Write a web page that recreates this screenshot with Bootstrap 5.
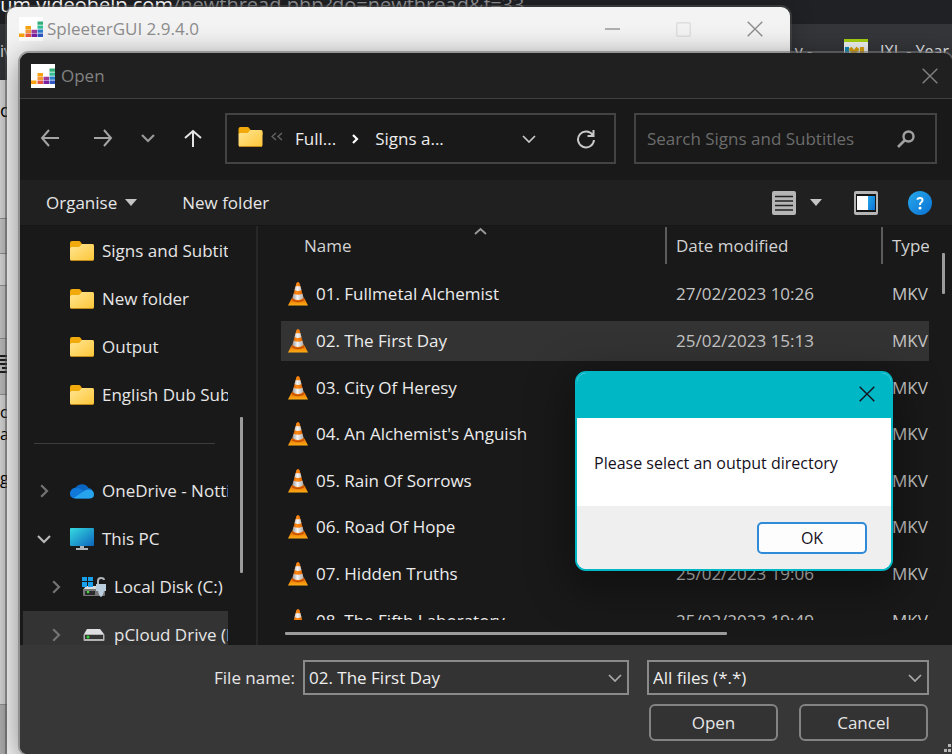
<!DOCTYPE html>
<html lang="en">
<head>
<meta charset="utf-8">
<meta name="viewport" content="width=device-width, initial-scale=1">
<title>Open</title>
<link href="https://cdn.jsdelivr.net/npm/bootstrap@5.3.0/dist/css/bootstrap.min.css" rel="stylesheet">
<style>
body{font-family:"Open Sans","Noto Sans",sans-serif;font-size:17px;line-height:24px;color:#e6e6e6;background:#e4e4e4;height:100vh;overflow:hidden;position:relative}
svg{display:block;flex:none}
button{font:inherit;color:inherit}
.plain-btn{background:none;border:0;padding:0}
/* browser behind the windows */
.browser{position:absolute;inset:0}
.url-row{height:24px;background:#202124;color:#8f9194;font-size:20px;line-height:9px;overflow:hidden;white-space:nowrap}
.url-row b{font-weight:400;color:#fff}
.url-row span{display:block;margin-left:-8px}
.mark-row{height:56px;background:#35363a;color:#e8eaed;font-size:16px;padding:15px 3px 0 0}
.page-edge{width:24px;color:#000;font-size:18px;overflow:hidden}
.page-edge div{border-top:1px solid #999;white-space:nowrap;overflow:hidden}
/* application window */
.app-win{position:absolute;left:7px;top:7px;right:162px;bottom:-20px;background:#f3f3f3;border-radius:9px 9px 0 0;box-shadow:0 0 0 2px rgba(80,80,80,.5),0 4px 24px rgba(0,0,0,.3);color:#8d8d8d;overflow:hidden}
.app-title{height:44px;padding:0 27px 0 12px}
/* file dialog */
.dlg{position:absolute;left:20px;top:53px;right:0;bottom:0;background:#191919;border-radius:9px 9px 0 8px;box-shadow:0 0 0 2px rgba(115,115,115,.6),0 6px 30px rgba(0,0,0,.5);overflow:hidden}
.dlg-title,.nav-strip,.tools,.foot{flex:none}
.dlg-title{height:46px;background:#202020;border-bottom:1px solid #3f3f3f;color:#828282;padding:0 14px 0 11px;gap:6px}
.nav-strip{height:81px;padding:0 15px 2px 18px}
.nav-btns{width:167px;margin-right:20px}
.nav-btns button{width:24px;display:flex;justify-content:center}
.box-line{border:2px solid #434343;height:51px;min-width:0}
.addr{flex:391 1 391px;padding:0 18px 0 11px;color:#ededed}
.find{flex:303 1 303px;padding:0 20px 0 11px;margin-left:18px}
.find input{background:none;border:0;outline:0;padding:0;min-width:0;color:#eee;width:100%}
.find input::placeholder{color:#6c6c6c;opacity:1}
.tools{height:46px;background:#202020;border-bottom:1px solid #161616;padding:0 20px 0 26px}
.make{margin-left:45px}
.views{gap:14px}
.pane{margin:0 30px 0 32px}
.side{width:208px;overflow:hidden;padding-top:1px}
.side-row{height:48px;padding-left:50px;gap:8px;white-space:nowrap;color:inherit;text-decoration:none}
.side-row svg.tw{margin-left:-34px;margin-right:10px}
.side-row.sub{padding-left:62px}
.side-row.here{background:#333;margin-left:3px;padding-left:59px}
.side-rule{height:1px;background:#3d3d3d;margin:24px 13px 23px 14px}
.side-gap{width:30px;border-right:2px solid #272727;padding:191px 0 0 12px}
.bar{background:#9b9b9b;border-radius:1px}
.bar-side{width:3px;height:156px}
.bar-h{height:3px;width:442px;margin:12px 0 0 4px}
.bar-v{right:7px;top:27px;width:3px;height:41px}
.files{flex:1;min-width:0;padding-left:23px}
.files-view{height:394px;flex:none;overflow:hidden;margin-right:23px;position:relative}
.files table{width:100%;height:418px;table-layout:fixed;border-collapse:separate;border-spacing:0}
.files th{font-weight:400;height:45px;padding:0 0 5px;color:#d2d2d2}
.files td,.files th{white-space:nowrap;overflow:hidden}
.files td{border:solid transparent;border-width:3px 0;padding:0;background-clip:padding-box;color:#c4c4c4}
.files td:first-child{color:#ececec}
.files tr.sel td{background-color:#333}
.col-date{width:216px}
.col-type{width:48px}
.files th+th,.files td+td{padding-left:11px}
.split{background:linear-gradient(#5c5c5c,#5c5c5c) 0 1px/2px 37px no-repeat}
.item-cell{padding-left:7px}
.head-name{padding-left:23px}
.sort{position:absolute;left:193px;top:1px}
.foot{background:#373737;height:109px;padding:15px 23px 0 20px}
.fname-label{width:255px}
.field{height:35px;background:#333;border:2px solid #8a8a8a;color:#eee;padding:0 5px 0 4px;min-width:0}
.field input,.field select{background:none;border:0;outline:0;color:inherit;padding:0;min-width:0;width:100%;appearance:none}
.field-name{flex:1}
.type-w{width:282px;margin-left:18px}
.pushes{padding:9px 1px 0 2px;gap:21px}
.push{background:#333;border:2px solid #838383;border-radius:6px;height:37px;flex:1;padding:0}
.grip{position:absolute;right:0;bottom:0}
/* message box */
.msg{position:absolute;right:59px;top:371px;width:318px;background:#fff;border:2px solid #00b7c6;border-radius:11px;overflow:hidden;color:#15101c;font-size:16px;box-shadow:0 12px 40px 8px rgba(0,0,0,.35)}
.msg-top{height:45px;background:#00b7c6;padding:0 16px 3px}
.msg-body{height:88px;padding:2px 17px 0}
.msg-foot{height:63px;background:#efefef;padding:0 24px}
.msg-ok{width:110px;height:32px;background:#fdfdfd;border:2px solid #2f8ad8;border-radius:5px;padding:0}
</style>
</head>
<body>
<svg width="0" height="0" class="position-absolute" aria-hidden="true">
 <defs>
  <linearGradient id="gf" x1="0" y1="0" x2="1" y2="1"><stop offset="0" stop-color="#ffe694"/><stop offset="1" stop-color="#fdc637"/></linearGradient>
  <linearGradient id="gm" x1="0" y1="0" x2="1" y2="1"><stop offset="0" stop-color="#35dbe0"/><stop offset="1" stop-color="#0d65be"/></linearGradient>
  <linearGradient id="gh" x1="0" y1="0" x2="1" y2="1"><stop offset="0" stop-color="#27a8ea"/><stop offset="1" stop-color="#0a72d4"/></linearGradient>
  <linearGradient id="gw"><stop offset="0" stop-color="#999"/><stop offset=".45" stop-color="#f5f5f5"/><stop offset="1" stop-color="#aaa"/></linearGradient>
  <linearGradient id="go"><stop offset="0" stop-color="#c95700"/><stop offset=".4" stop-color="#ff8b14"/><stop offset="1" stop-color="#d96000"/></linearGradient>
  <linearGradient id="gb" x1="0" y1="0" x2="0" y2="1"><stop offset="0" stop-color="#e36a00"/><stop offset="1" stop-color="#ffae16"/></linearGradient>
  <symbol id="folder" viewBox="0 0 24 20"><path d="M0 2Q0 0 2 0h7q1 0 1.600 1l1.400 2h10q2 0 2 2v3H0z" fill="#f1a90b"/><path d="M0 8Q0 6 2 6h7l3-3h10q2 0 2 2v13q0 2-2 2H2q-2 0-2-2z" fill="url(#gf)"/><path d="M1 19.500h22" stroke="#c18a18"/></symbol>
  <symbol id="cone" viewBox="0 0 20 24"><path d="M3.500 16.500h13L20 23.500H0z" fill="url(#gb)"/><path d="M4 18.500Q10 22 16 18.500l-1-3H5z" fill="#c54f00"/><path d="M10 0q1.200 0 1.700 1.500L15.800 17Q10 20.500 4.200 17L8.300 1.500Q8.800 0 10 0z" fill="url(#go)"/><path d="M7.600 4.200h4.800l1.100 4q-3.500 1.600-7 0zM5.600 11.700q4.400 2 8.800 0l1.200 4.300Q10 19.800 4.400 16z" fill="url(#gw)"/></symbol>
  <symbol id="eq" viewBox="0 0 24 24"><path fill="#fff" d="M0 0h24v24H0z"/><path fill="#f7a311" d="M0 16.500h5.500V20H0zM6.500 9H12v3.500H6.500z"/><path fill="#f39a3a" d="M6.500 12.700H12v3.200H6.500z"/><path fill="#e8543e" d="M6.500 16.500H12V20H6.500z"/><path fill="#a03b9a" d="M12.500 12.700H18v3.200h-5.500z"/><path fill="#7a1fa0" d="M12.500 16.500H18V20h-5.500z"/><path fill="#2fae77" d="M18.500 4.500H24v3.200h-5.500z"/><path fill="#35bd95" d="M18.500 8.500H24v3.200h-5.500z"/><path fill="#2a7fc9" d="M18.500 12.500H24v3.200h-5.500z"/><path fill="#2f58c4" d="M18.500 16.500H24V20h-5.500z"/></symbol>
  <symbol id="x" viewBox="0 0 16 16"><path d="M.7.700l14.600 14.600M15.300.700L.7 15.300" stroke="currentColor" stroke-width="1.400" fill="none"/></symbol>
  <symbol id="dn" viewBox="0 0 14 8"><path d="M1 1l6 6 6-6" stroke="currentColor" stroke-width="1.700" fill="none"/></symbol>
  <symbol id="tri" viewBox="0 0 12 7"><path d="M0 0h12L6 7z" fill="#c4c4c4"/></symbol>
  <symbol id="rt" viewBox="0 0 9 14"><path d="M1.200 1.200L7 7l-5.800 5.800" stroke="#747474" stroke-width="2.200" fill="none"/></symbol>
 </defs>
</svg>

<div class="browser">
 <div class="url-row"><span><b>rum.videohelp.com</b>/newthread.php?do=newthread&amp;f=33</span></div>
 <div class="mark-row d-flex justify-content-between">
  <span>iv</span>
  <span class="d-flex gap-2"><span class="me-4">y -</span><svg class="me-1" width="24" height="24"><path fill="#f0f3f3" d="M0 0h24v24H0z"/><path fill="#a5d013" d="M0 0h24v3H0z"/><path d="M3 8v12" stroke="#1189b8" stroke-width="4"/><path d="M6 9l8 10M14 9L6 19M18 8v10" stroke="#dba40c" stroke-width="4"/></svg><span>IXL - Year</span></span>
 </div>
 <div class="page-edge" aria-hidden="true">
  <div class="border-0" style="height:138px;padding-top:18px">o</div>
  <div style="height:35px;background:#d0d0d0"></div>
  <div style="height:32px"></div>
  <div style="height:53px;background:#d0d0d0"></div>
  <div style="height:56px;background:#c8c8c8;padding-top:16px"><svg width="7" height="18"><path d="M0 1h7M0 5h7M0 9h7M2 13h5M0 17h7" stroke="#222" stroke-width="2"/></svg></div>
  <div style="height:310px;font-size:16px;line-height:22px;padding-top:6px">ci<br>ac<br><br>g</div>
  <div style="height:60px;background:#bbb"></div>
 </div>
</div>

<section class="app-win" aria-label="SpleeterGUI">
 <div class="app-title d-flex align-items-center">
  <svg width="24" height="24"><use href="#eq"/></svg><span class="ms-1 flex-fill">SpleeterGUI 2.9.4.0</span>
  <button class="plain-btn" aria-label="Minimise"><svg width="15" height="2"><path d="M0 1h15" stroke="#999" stroke-width="1.500"/></svg></button>
  <button class="plain-btn ms-5 px-1" aria-label="Maximise"><svg class="ms-1" width="15" height="15"><rect x=".75" y=".75" width="13.500" height="13.500" rx="1" fill="none" stroke="#dedede" stroke-width="1.500"/></svg></button>
  <button class="plain-btn ms-5 ps-1" aria-label="Close"><svg width="16" height="16"><use href="#x"/></svg></button>
 </div>
</section>

<main class="dlg d-flex flex-column">
 <header class="dlg-title d-flex align-items-center">
  <svg width="24" height="24"><use href="#eq"/></svg><span class="flex-fill">Open</span>
  <button class="plain-btn" aria-label="Close dialog"><svg width="16" height="16"><use href="#x"/></svg></button>
 </header>

 <div class="nav-strip d-flex align-items-center">
  <div class="nav-btns d-flex justify-content-between">
   <button class="plain-btn" aria-label="Back"><svg width="20" height="18"><path d="M9 1L2 9l7 8M2 9h17" fill="none" stroke="#a4a4a4" stroke-width="2"/></svg></button>
   <button class="plain-btn ms-2" aria-label="Forward"><svg width="20" height="18"><path d="M11 1l7 8-7 8M18 9H1" fill="none" stroke="#a4a4a4" stroke-width="2"/></svg></button>
   <button class="plain-btn align-items-center" aria-label="Recent locations"><svg width="14" height="9"><path d="M1 1l6 6 6-6" fill="none" stroke="#999" stroke-width="2.200"/></svg></button>
   <button class="plain-btn" aria-label="Up"><svg width="18" height="19"><path d="M1 9l8-7 8 7M9 2v16" fill="none" stroke="#e4e4e4" stroke-width="2"/></svg></button>
  </div>
  <div class="addr box-line d-flex align-items-center">
   <svg class="mb-1" width="25" height="20"><use href="#folder"/></svg>
   <svg class="ms-2 mb-1" width="12" height="9"><path d="M5 1L1 4.500 5 8M11 1L7 4.500 11 8" fill="none" stroke="#626262" stroke-width="1.500"/></svg>
   <a href="#" class="text-reset text-decoration-none ms-2 ps-1">Full...</a>
   <svg class="mx-3" width="7" height="10"><path d="M1 1l4 4-4 4" fill="none" stroke="#fff" stroke-width="2.200"/></svg>
   <a href="#" class="text-reset text-decoration-none flex-fill">Signs a...</a>
   <button class="plain-btn me-3" aria-label="Previous locations"><svg class="me-4" width="14" height="8" color="#c8c8c8"><use href="#dn"/></svg></button>
   <button class="plain-btn" aria-label="Refresh"><svg width="20" height="20" viewBox="0 0 20 20"><path d="M17 6.500A8 8 0 1 0 18 11M17.500 1v6h-6" fill="none" stroke="#c8c8c8" stroke-width="2"/></svg></button>
  </div>
  <div class="find box-line d-flex align-items-center">
   <input type="search" aria-label="Search Signs and Subtitles" placeholder="Search Signs and Subtitles">
   <svg width="18" height="18"><circle cx="11.500" cy="6.500" r="5" fill="none" stroke="#a0a0a0" stroke-width="2.400"/><path d="M8 10l-7 7" stroke="#a0a0a0" stroke-width="2.600"/></svg>
  </div>
 </div>

 <div class="tools d-flex align-items-center">
  <button class="plain-btn d-flex align-items-center gap-2">Organise <svg width="12" height="7"><use href="#tri"/></svg></button>
  <button class="plain-btn make">New folder</button>
  <button class="plain-btn views ms-auto d-flex align-items-center" aria-label="Change view"><svg width="24" height="24"><rect width="24" height="24" rx="2" fill="#b5b5b5"/><path d="M3 5.500h18M3 10h18M3 14.500h18M3 19h18" stroke="#222" stroke-width="1.600"/></svg><svg width="12" height="7"><use href="#tri"/></svg></button>
  <button class="plain-btn pane" aria-label="Preview pane"><svg width="24" height="24"><rect width="24" height="24" rx="2" fill="#b5b5b5"/><path d="M2 3h20v18H2z" fill="#151515"/><path fill="#fff" d="M3 5h11v14H3z"/><path fill="url(#gh)" d="M14 5h7v14h-7z"/></svg></button>
  <button class="plain-btn" aria-label="Help"><svg width="24" height="24"><circle cx="12" cy="12" r="12" fill="url(#gh)"/><path d="M9.500 8.800Q9.500 7 12 7t2.500 2q0 1.300-1.300 2.200T12 14" fill="none" stroke="#fff" stroke-width="2"/><circle cx="12" cy="17" r="1.500" fill="#fff"/></svg></button>
 </div>

 <div class="d-flex flex-fill overflow-hidden">
  <nav class="side" aria-label="Folders">
   <a href="#" class="side-row d-flex align-items-center"><svg width="24" height="20"><use href="#folder"/></svg>Signs and Subtitles</a>
   <a href="#" class="side-row d-flex align-items-center"><svg width="24" height="20"><use href="#folder"/></svg>New folder</a>
   <a href="#" class="side-row d-flex align-items-center"><svg width="24" height="20"><use href="#folder"/></svg>Output</a>
   <a href="#" class="side-row d-flex align-items-center"><svg width="24" height="20"><use href="#folder"/></svg>English Dub Subtitles</a>
   <div class="side-rule"></div>
   <a href="#" class="side-row d-flex align-items-center"><svg class="tw" width="16" height="14" viewBox="0 0 16 14"><use href="#rt" x="4" width="9" height="14"/></svg><svg width="24" height="16"><path d="M6 15.500a5.500 5.500 0 0 1-.3-11A7.500 7.500 0 0 1 18.500 5a5.300 5.300 0 0 1 0 10.500z" fill="#0a66c2"/><path d="M3 6Q8 3 14 8l-9 7.500Q0 15 0 10.500 0 7.500 3 6z" fill="#1078d8"/><path d="M4 14.800L14 8q2-2 5-1.500 5 .5 5 5 0 4-4.500 4H6q-1.200 0-2-.7z" fill="#28a3ee"/></svg>OneDrive - Nottingham</a>
   <a href="#" class="side-row d-flex align-items-center"><svg class="tw" width="16" height="14"><path d="M2 4l6 6 6-6" stroke="#b8b8b8" stroke-width="2.200" fill="none"/></svg><svg width="24" height="24"><path d="M10 18h4v3h4v2H6v-2h4z" fill="#aeb5ba"/><rect y="1" width="24" height="18" rx="1" fill="url(#gm)"/></svg>This PC</a>
   <a href="#" class="side-row sub d-flex align-items-center"><svg class="tw" width="16" height="14" viewBox="0 0 16 14"><use href="#rt" x="4" width="9" height="14"/></svg><svg width="24" height="22"><path d="M4 10h16l3 4H1z" fill="#dcdcdc"/><rect x="1" y="13" width="22" height="7" rx="1" fill="#777"/><path fill="#2b2b2b" d="M3 15h10v4H3z"/><circle cx="6" cy="16" r="1.300" fill="#3ad63a"/><path d="M0 1h5v4H0zM6 1h5v4H6zM0 6h5v5H0zM6 6h5v5H6z" fill="#18a0ea"/><path d="M16 8V5q0-3 3-3t3 2" fill="none" stroke="#aeb5bb" stroke-width="2"/><path d="M14 8h10v7h-2q-1 5-3 6-2-1-3-6h-2z" fill="#b9cddd"/></svg>Local Disk (C:)</a>
   <a href="#" class="side-row sub here d-flex align-items-center"><svg class="tw" width="16" height="14" viewBox="0 0 16 14"><use href="#rt" x="4" width="9" height="14"/></svg><svg width="24" height="14"><path d="M5 1h13l4 5H2z" fill="#dedee2"/><rect x="1.500" y="6" width="21" height="7" rx="1" fill="#b2b2b2"/><path fill="#333" d="M3 7h18v4H3z"/><circle cx="6" cy="9" r="1.500" fill="#35d435"/></svg>pCloud Drive (P:)</a>
  </nav>
  <div class="side-gap"><div class="bar bar-side"></div></div>

  <div class="files d-flex flex-column position-relative">
   <div class="files-view">
    <table>
     <colgroup><col><col class="col-date"><col class="col-type"></colgroup>
     <thead><tr><th><span class="head-name">Name</span></th><th class="split">Date modified</th><th class="split">Type</th></tr></thead>
     <tbody id="rows"></tbody>
    </table>
    <svg class="sort" width="13" height="8"><path d="M1 7l5.500-5L12 7" fill="none" stroke="#9a9a9a" stroke-width="1.800"/></svg>
   </div>
   <div class="bar bar-h"></div>
   <div class="bar bar-v position-absolute"></div>
  </div>
 </div>

 <footer class="foot position-relative">
  <div class="d-flex align-items-center">
   <label for="fname" class="fname-label flex-shrink-0 text-end me-2">File name:</label>
   <div class="field field-name d-flex align-items-center"><input id="fname" type="text" value="02. The First Day"><svg width="14" height="8" color="#aaa"><use href="#dn"/></svg></div>
   <div class="field type-w d-flex align-items-center"><select aria-label="File type"><option>All files (*.*)</option></select><svg width="14" height="8" color="#aaa"><use href="#dn"/></svg></div>
  </div>
  <div class="type-w pushes ms-auto d-flex"><button class="push">Open</button><button class="push">Cancel</button></div>
  <svg class="grip" width="10" height="10"><path d="M6 0h3v3H6zM2 5h3v3H2zM6 5h3v3H6z" fill="#b5b5b5"/></svg>
 </footer>
</main>

<div class="msg" role="dialog" aria-label="Message">
 <div class="msg-top d-flex align-items-center justify-content-end"><button class="plain-btn" aria-label="Close message"><svg width="16" height="16"><use href="#x"/></svg></button></div>
 <div class="msg-body d-flex align-items-center">Please select an output directory</div>
 <div class="msg-foot d-flex align-items-center justify-content-end"><button class="msg-ok">OK</button></div>
</div>

<script>
const files=[["01. Fullmetal Alchemist","27/02/2023 10:26"],["02. The First Day","25/02/2023 15:13"],["03. City Of Heresy",""],["04. An Alchemist's Anguish",""],["05. Rain Of Sorrows",""],["06. Road Of Hope",""],["07. Hidden Truths","25/02/2023 19:06"],["08. The Fifth Laboratory","25/02/2023 19:49"]];
document.getElementById("rows").innerHTML=files.map((f,i)=>`<tr class="${i===1?"sel":""}"><td><div class="item-cell d-flex align-items-center gap-2"><svg width="20" height="24"><use href="#cone"/></svg>${f[0]}</div></td><td>${f[1]}</td><td>MKV</td></tr>`).join("");
</script>
<script src="https://cdn.jsdelivr.net/npm/bootstrap@5.3.0/dist/js/bootstrap.bundle.min.js"></script>
</body>
</html>
